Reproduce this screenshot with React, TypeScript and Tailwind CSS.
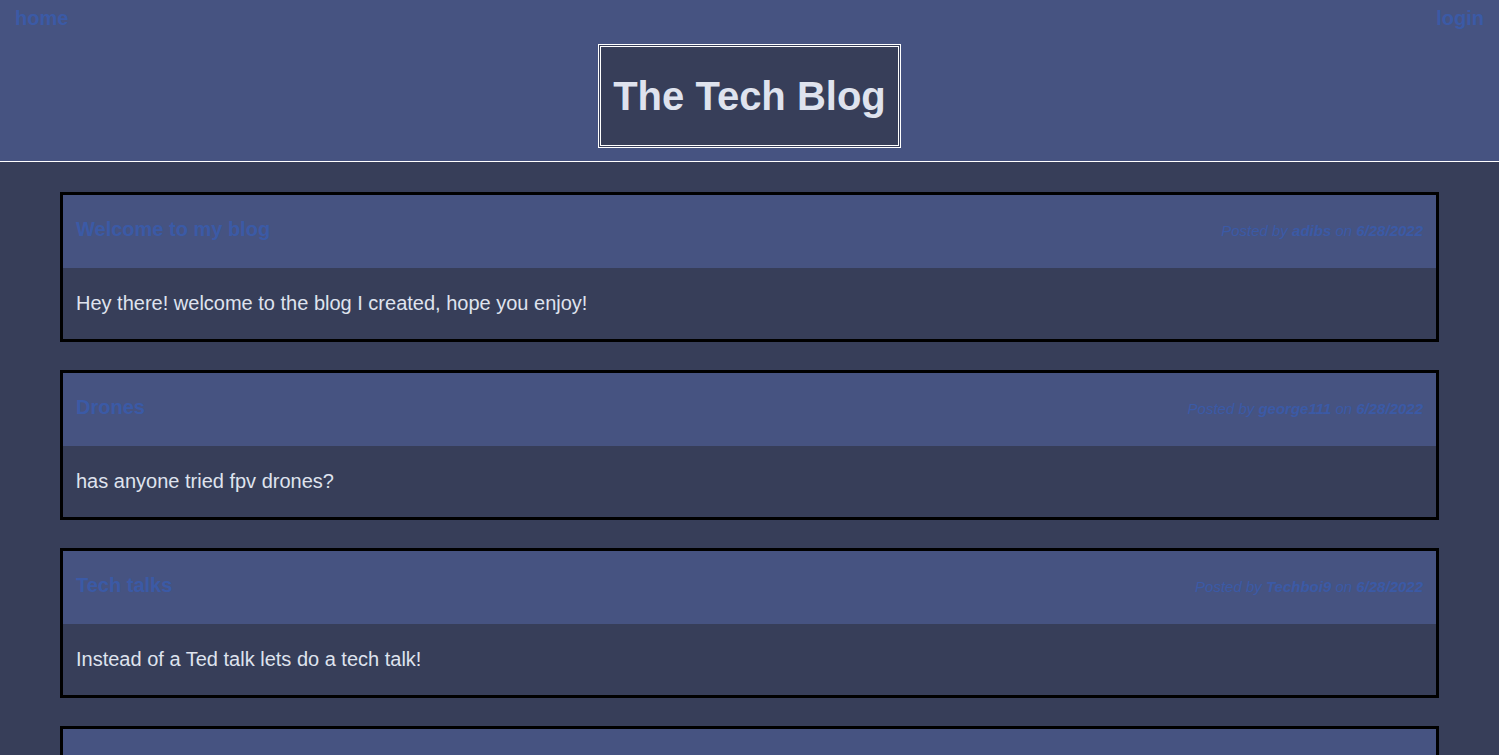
const posts = [
  { title: 'Welcome to my blog', user: 'adibs', date: '6/28/2022', body: 'Hey there! welcome to the blog I created, hope you enjoy!' },
  { title: 'Drones', user: 'george111', date: '6/28/2022', body: 'has anyone tried fpv drones?' },
  { title: 'Tech talks', user: 'Techboi9', date: '6/28/2022', body: 'Instead of a Ted talk lets do a tech talk!' },
  { title: 'Laptops', user: 'adibs', date: '6/28/2022', body: 'What laptop do you all use?' },
];

function PostCard({ post }: { post: (typeof posts)[number] }) {
  return (
    <article className="border-[3px] border-black">
      <div className="flex h-[73px] items-center justify-between bg-[#465381] px-[13px]">
        <a href="#" className="mb-[5px] text-[20px] font-bold text-[#3b5aa6]">
          {post.title}
        </a>
        <p className="text-[15px] italic text-[#3b5aa6]">
          Posted by <span className="font-bold">{post.user}</span> on{' '}
          <span className="font-bold">{post.date}</span>
        </p>
      </div>
      <div className="flex h-[71px] items-center bg-[#373e59] px-[13px] pb-[2px] text-[20px] text-[#dfe3ee]">
        <p>{post.body}</p>
      </div>
    </article>
  );
}

export default function App() {
  return (
    <div className="min-h-screen bg-[#373e59] font-['Liberation_Sans',Arial,sans-serif]">
      <header className="border-b border-white bg-[#465381] pb-[13px]">
        <nav className="flex h-[36px] items-start justify-between px-[15px] pt-[3px]">
          <a href="#" className="text-[20px] font-bold text-[#3b5aa6]">
            home
          </a>
          <a href="#" className="text-[20px] font-bold text-[#3b5aa6]">
            login
          </a>
        </nav>
        <div className="mt-[8px] flex justify-center">
          <h1 className="border-[3px] border-double border-white bg-[#373e59] px-[12px] py-[26px] text-[40px] leading-[46px] font-bold text-[#dfe3ee]">
            The Tech Blog
          </h1>
        </div>
      </header>
      <main className="flex flex-col gap-[28px] px-[60px] pt-[30px] pb-[30px]">
        {posts.map((post) => (
          <PostCard key={post.title} post={post} />
        ))}
      </main>
    </div>
  );
}
